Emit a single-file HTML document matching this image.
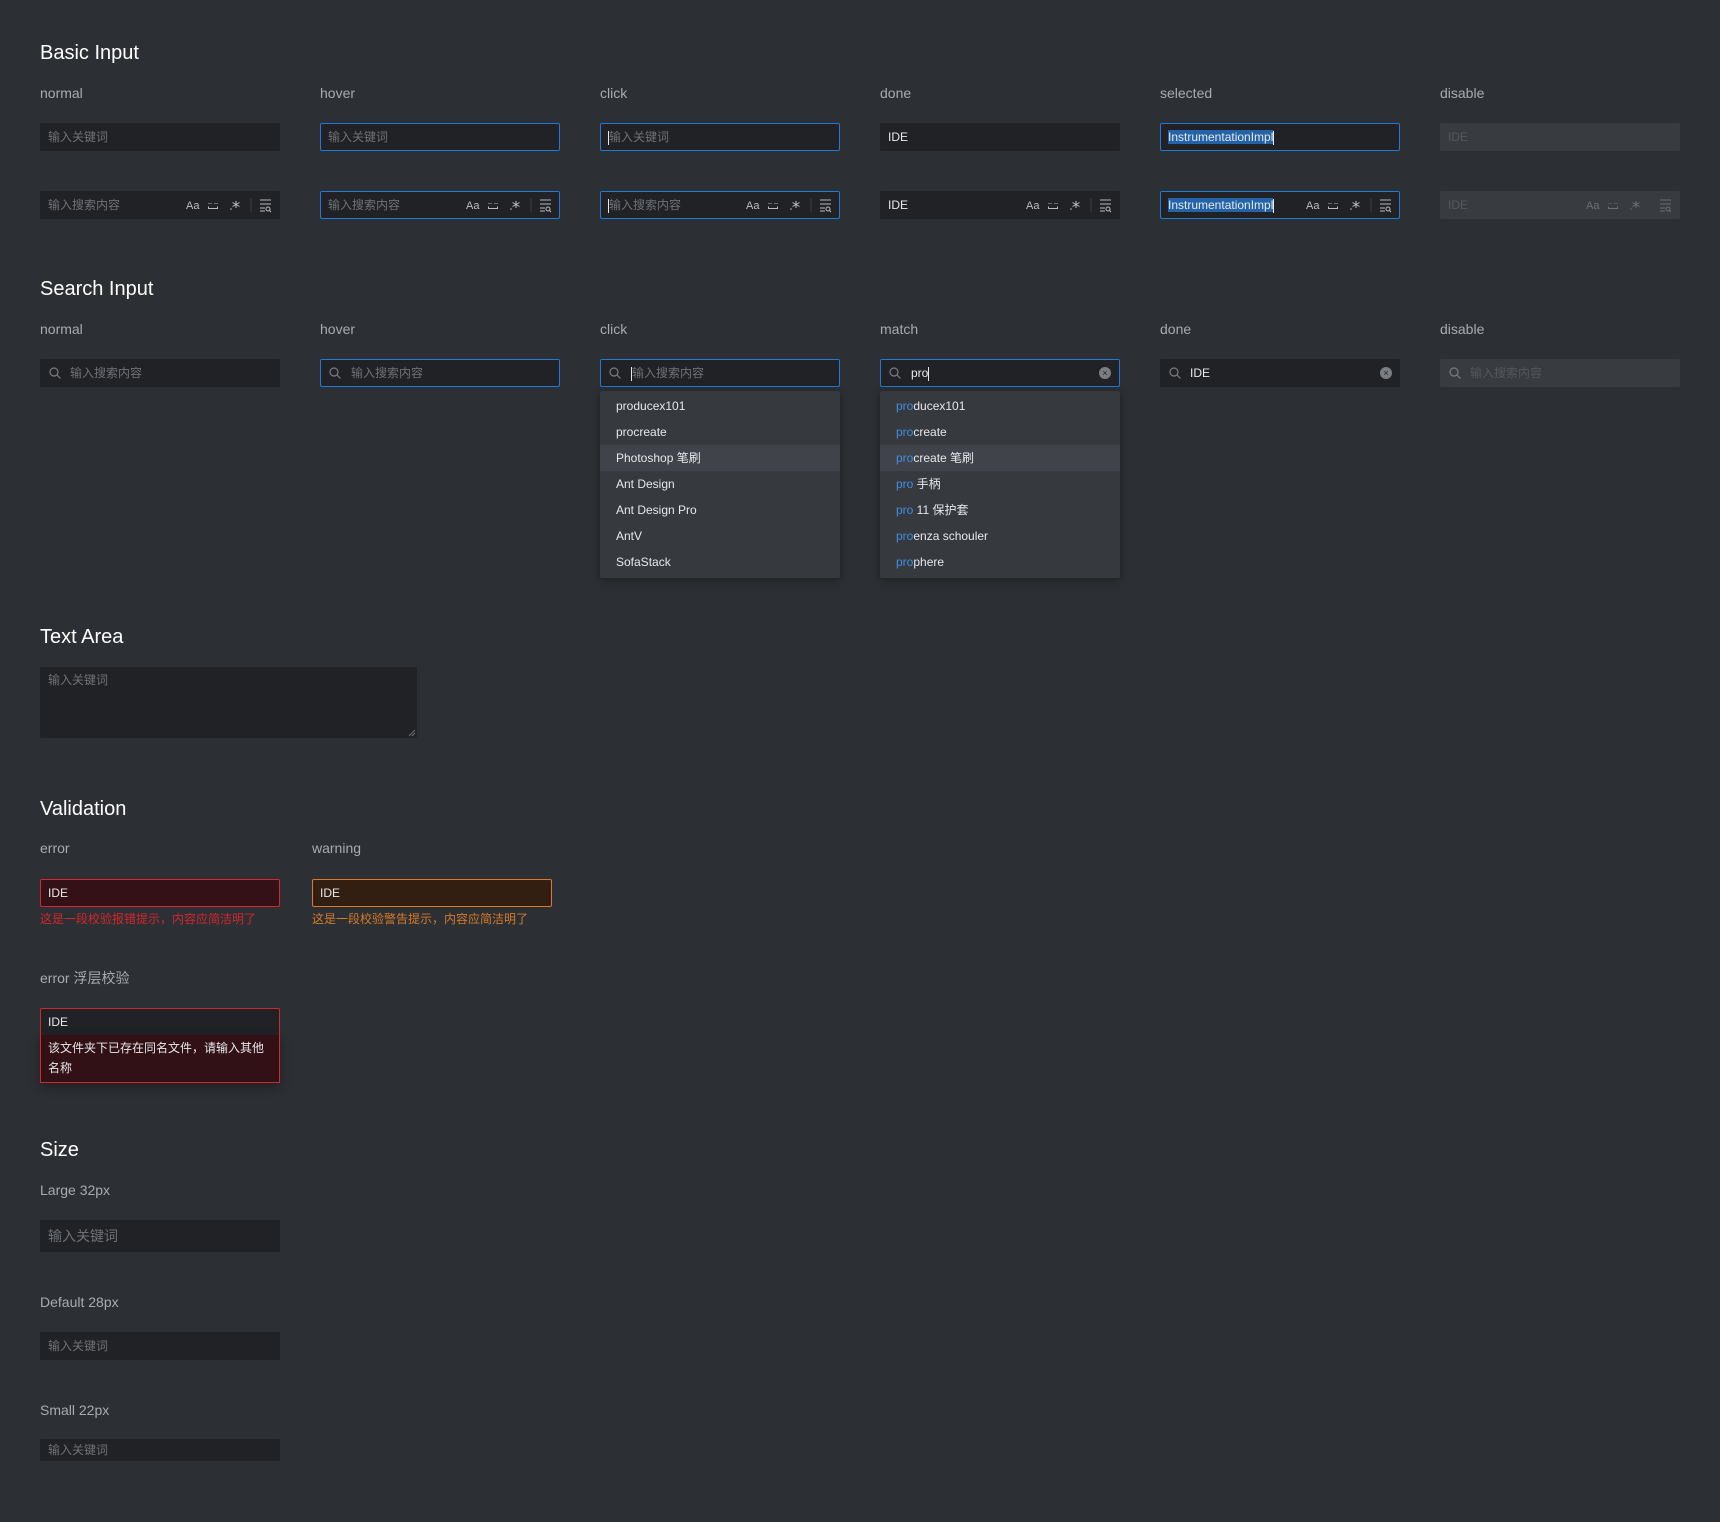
<!DOCTYPE html>
<html><head><meta charset="utf-8"><style>
*{box-sizing:border-box;margin:0;padding:0}
body{width:1720px;height:1522px;background:#2c2f33;font-family:"Liberation Sans","Noto Sans CJK SC",sans-serif;color:#d6d8db;position:relative;overflow:hidden}
.a{position:absolute}
.t{font-size:20px;color:#fff;line-height:24px}
.l{font-size:14px;color:#a8abb0;line-height:18px}
.in{position:absolute;width:240px;height:28px;background:#202225;border-radius:2px;font-size:12px;line-height:28px;padding-left:8px;color:#6e7177}
.hb{border:1px solid #1f7ad8;line-height:26px;padding-left:7px}
.dis{background:#383b40;color:#55585d}
.v{color:#e6e8eb}
.ic{position:absolute;right:7px;top:0;height:100%;display:flex;align-items:center}
.dis .ic{opacity:.4}
.sel{background:#2463a8;color:#e6e8eb}
.cur{display:inline-block;width:1px;height:14px;background:#e6e8eb;vertical-align:middle}
.sr{padding-left:30px}
.sr svg{position:absolute;left:9px;top:8px}
.hb.sr svg{left:8px;top:7px}
.dd{position:absolute;width:240px;height:187px;background:#36393e;border-radius:2px;box-shadow:0 2px 8px rgba(0,0,0,.35);padding-top:2px}
.dd div{height:26px;line-height:26px;padding-left:16px;font-size:12px;color:#e6e8eb}
.dd .h{background:#404349}
.dd b{font-weight:normal;color:#3e8ee6}
</style></head><body>
<svg width="0" height="0" style="position:absolute"><defs>
<g id="mg"><circle cx="5" cy="5" r="4" fill="none" stroke="#7a7d82" stroke-width="1.2"/><path d="M8 8l3.5 3.5" stroke="#7a7d82" stroke-width="1.2"/></g>
<g id="tools" fill="none" stroke="#b8bbc0" stroke-width="1">
<text x="0" y="12" font-size="11" fill="#b8bbc0" stroke="none" font-family="Liberation Sans">Aa</text>
<path d="M23 6v1M25 6v1M29 6v1M31 6v1M22.5 9.5v2h9v-2"/>
<circle cx="45" cy="12" r="0.8" fill="#b8bbc0" stroke="none"/>
<path d="M50 4v7M46.5 5.5l7 4M53.5 5.5l-7 4"/>
<path d="M65 1v14" stroke="#3a3d42"/>
<path d="M74 3h11M74 7h11M74 11h5M74 14h5"/><circle cx="82" cy="12" r="2"/><path d="M83.5 13.5l1.5 1.5"/>
</g></defs></svg>

<div class="a t" style="left:40px;top:41px">Basic Input</div>
<div class="a l" style="left:40px;top:84px">normal</div>
<div class="a l" style="left:320px;top:84px">hover</div>
<div class="a l" style="left:600px;top:84px">click</div>
<div class="a l" style="left:880px;top:84px">done</div>
<div class="a l" style="left:1160px;top:84px">selected</div>
<div class="a l" style="left:1440px;top:84px">disable</div>

<div class="in" style="left:40px;top:123px">输入关键词</div>
<div class="in hb" style="left:320px;top:123px">输入关键词</div>
<div class="in hb" style="left:600px;top:123px"><span class="cur"></span>输入关键词</div>
<div class="in v" style="left:880px;top:123px">IDE</div>
<div class="in hb v" style="left:1160px;top:123px"><span class="sel">InstrumentationImpl</span><span class="cur"></span></div>
<div class="in dis" style="left:1440px;top:123px">IDE</div>

<div class="in" style="left:40px;top:191px">输入搜索内容<div class="ic"><svg width="87" height="16"><use href="#tools"/></svg></div></div>
<div class="in hb" style="left:320px;top:191px">输入搜索内容<div class="ic" style="right:6px"><svg width="87" height="16"><use href="#tools"/></svg></div></div>
<div class="in hb" style="left:600px;top:191px"><span class="cur"></span>输入搜索内容<div class="ic" style="right:6px"><svg width="87" height="16"><use href="#tools"/></svg></div></div>
<div class="in v" style="left:880px;top:191px">IDE<div class="ic"><svg width="87" height="16"><use href="#tools"/></svg></div></div>
<div class="in hb v" style="left:1160px;top:191px"><span class="sel">InstrumentationImpl</span><span class="cur"></span><div class="ic" style="right:6px"><svg width="87" height="16"><use href="#tools"/></svg></div></div>
<div class="in dis" style="left:1440px;top:191px">IDE<div class="ic"><svg width="87" height="16"><use href="#tools"/></svg></div></div>

<div class="a t" style="left:40px;top:277px">Search Input</div>
<div class="a l" style="left:40px;top:320px">normal</div>
<div class="a l" style="left:320px;top:320px">hover</div>
<div class="a l" style="left:600px;top:320px">click</div>
<div class="a l" style="left:880px;top:320px">match</div>
<div class="a l" style="left:1160px;top:320px">done</div>
<div class="a l" style="left:1440px;top:320px">disable</div>

<div class="in sr" style="left:40px;top:359px"><svg width="12" height="12"><use href="#mg"/></svg>输入搜索内容</div>
<div class="in hb sr" style="left:320px;top:359px"><svg width="12" height="12"><use href="#mg"/></svg>输入搜索内容</div>
<div class="in hb sr" style="left:600px;top:359px"><svg width="12" height="12"><use href="#mg"/></svg><span class="cur"></span>输入搜索内容</div>
<div class="in hb sr v" style="left:880px;top:359px"><svg width="12" height="12"><use href="#mg"/></svg>pro<span class="cur"></span><span class="a" style="right:8px;top:7px;width:12px;height:12px;border-radius:50%;background:#7a7d82;color:#202225;font-size:9px;line-height:12px;text-align:center">×</span></div>
<div class="in sr v" style="left:1160px;top:359px"><svg width="12" height="12"><use href="#mg"/></svg>IDE<span class="a" style="right:8px;top:8px;width:12px;height:12px;border-radius:50%;background:#7a7d82;color:#202225;font-size:9px;line-height:12px;text-align:center">×</span></div>
<div class="in sr dis" style="left:1440px;top:359px"><svg width="12" height="12"><use href="#mg"/></svg>输入搜索内容</div>

<div class="dd" style="left:600px;top:391px"><div>producex101</div><div>procreate</div><div class="h">Photoshop 笔刷</div><div>Ant Design</div><div>Ant Design Pro</div><div>AntV</div><div>SofaStack</div></div>
<div class="dd" style="left:880px;top:391px"><div><b>pro</b>ducex101</div><div><b>pro</b>create</div><div class="h"><b>pro</b>create 笔刷</div><div><b>pro</b> 手柄</div><div><b>pro</b> 11 保护套</div><div><b>pro</b>enza schouler</div><div><b>pro</b>phere</div></div>

<div class="a t" style="left:40px;top:625px">Text Area</div>
<div class="in" style="left:40px;top:667px;width:377px;height:71px;line-height:26px">输入关键词<svg class="a" style="right:1px;bottom:1px" width="8" height="8"><path d="M7 1L1 7M7 4L4 7" stroke="#6e7177"/></svg></div>

<div class="a t" style="left:40px;top:797px">Validation</div>
<div class="a l" style="left:40px;top:839px">error</div>
<div class="a l" style="left:312px;top:839px">warning</div>
<div class="in v" style="left:40px;top:879px;background:#331117;border:1px solid #d4262f;line-height:26px;padding-left:7px">IDE</div>
<div class="in v" style="left:312px;top:879px;background:#331f12;border:1px solid #d77a2a;line-height:26px;padding-left:7px">IDE</div>
<div class="a" style="left:40px;top:910px;font-size:12px;color:#d4262f">这是一段校验报错提示，内容应简洁明了</div>
<div class="a" style="left:312px;top:910px;font-size:12px;color:#d77a2a">这是一段校验警告提示，内容应简洁明了</div>
<div class="a l" style="left:40px;top:969px">error 浮层校验</div>
<div class="in v" style="left:40px;top:1008px;border:1px solid #d4262f;line-height:26px;padding-left:7px">IDE</div>
<div class="a" style="left:40px;top:1035px;width:240px;height:48px;background:#311016;border:1px solid #d4262f;border-top:none;font-size:12px;line-height:20px;padding:3px 7px;color:#e6e8eb;box-shadow:0 4px 10px rgba(0,0,0,.3)">该文件夹下已存在同名文件，请输入其他名称</div>

<div class="a t" style="left:40px;top:1138px">Size</div>
<div class="a l" style="left:40px;top:1181px">Large 32px</div>
<div class="in" style="left:40px;top:1220px;height:32px;line-height:32px;font-size:14px">输入关键词</div>
<div class="a l" style="left:40px;top:1293px">Default 28px</div>
<div class="in" style="left:40px;top:1332px">输入关键词</div>
<div class="a l" style="left:40px;top:1401px">Small 22px</div>
<div class="in" style="left:40px;top:1439px;height:22px;line-height:22px">输入关键词</div>
</body></html>
